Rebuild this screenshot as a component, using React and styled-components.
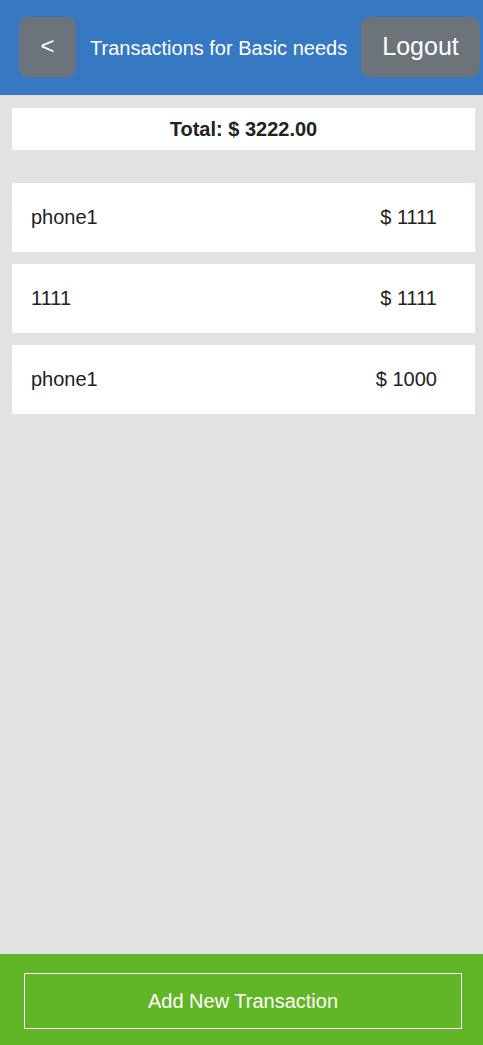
import styled, { createGlobalStyle } from 'styled-components'

const GlobalStyle = createGlobalStyle`
html, body {
  margin: 0;
  padding: 0;
  background-color: #e3e2e0;
  font-family: 'Liberation Sans', Arial, sans-serif;
}
`;

const Page = styled.div`
min-height: 100vh;
display: flex;
flex-direction: column;
background-color: #e3e2e0;
`;

const Header = styled.header`
height: 95px;
box-sizing: border-box;
display: flex;
align-items: center;
padding: 0 3px 1px 19px;
background-color: #3778c2;
`;

const HeaderButton = styled.button`
height: 60px;
border: none;
border-radius: 9px;
background-color: #6c737b;
color: #ffffff;
font-family: inherit;
font-size: ${(props) => props.$size}px;
padding: 0;
cursor: pointer;
`;

const BackButton = styled(HeaderButton)`
width: 57px;
padding-bottom: 3px;
`;

const LogoutButton = styled(HeaderButton)`
width: 119px;
margin-left: auto;
padding-bottom: 2px;
`;

const Title = styled.h1`
margin: 0 0 0 14px;
font-size: 20px;
font-weight: 400;
color: #ffffff;
white-space: nowrap;
padding-top: 3px;
`;

const Main = styled.main`
flex: 1;
padding: 13px 8px 0 12px;
`;

const TotalBar = styled.div`
height: 42px;
display: flex;
align-items: center;
justify-content: center;
background-color: #ffffff;
font-size: 20px;
font-weight: 700;
color: #222222;
`;

const List = styled.ul`
list-style: none;
margin: 33px 0 0;
padding: 0;
display: flex;
flex-direction: column;
gap: 12px;
`;

const Row = styled.li`
height: 69px;
display: flex;
align-items: center;
justify-content: space-between;
padding: 0 38px 0 19px;
background-color: #ffffff;
font-size: 20px;
color: #222222;
`;

const Footer = styled.footer`
height: 91px;
box-sizing: border-box;
padding: 19px 21px 16px 24px;
background-color: #61b526;
`;

const AddButton = styled.button`
width: 100%;
height: 56px;
border: 1px solid #ffffff;
background: transparent;
color: #ffffff;
font-family: inherit;
font-size: 20px;
cursor: pointer;
`;

const transactions = [
  { name: 'phone1', amount: 1111 },
  { name: '1111', amount: 1111 },
  { name: 'phone1', amount: 1000 },
];

const App = () => {
  const total = transactions.reduce((sum, t) => sum + t.amount, 0);
  return (
    <Page>
      <GlobalStyle />
      <Header>
        <BackButton $size={24}>&lt;</BackButton>
        <Title>Transactions for Basic needs</Title>
        <LogoutButton $size={25}>Logout</LogoutButton>
      </Header>
      <Main>
        <TotalBar>Total: $ {total.toFixed(2)}</TotalBar>
        <List>
          {transactions.map((t, i) => (
            <Row key={i}>
              <span>{t.name}</span>
              <span>$ {t.amount}</span>
            </Row>
          ))}
        </List>
      </Main>
      <Footer>
        <AddButton>Add New Transaction</AddButton>
      </Footer>
    </Page>
  )
}

export default App
